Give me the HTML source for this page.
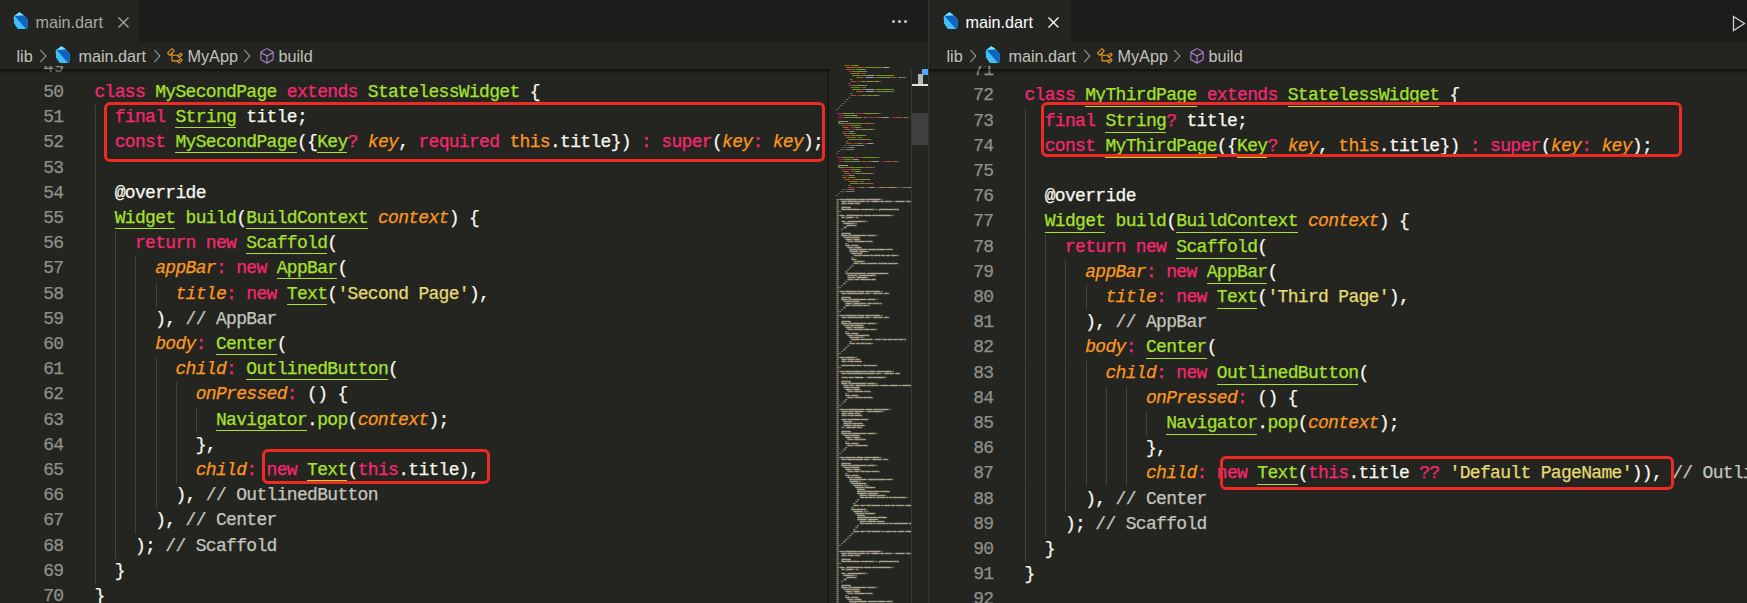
<!DOCTYPE html>
<html><head><meta charset="utf-8"><style>
*{margin:0;padding:0;box-sizing:border-box}
html,body{width:1747px;height:603px;overflow:hidden;background:#242520}
body{position:relative;font-family:"Liberation Sans",sans-serif}
.abs{position:absolute}
.pane{position:absolute;top:0;height:603px;overflow:hidden}
.ig{position:absolute;width:1px;background:#42433d}
.ln{position:absolute;-webkit-text-stroke:0.25px;width:60px;text-align:right;font-family:"Liberation Mono",monospace;font-size:18.0px;letter-spacing:-0.682px;line-height:25.2px;color:#90908a;white-space:pre}
.cl{position:absolute;-webkit-text-stroke:0.25px;font-family:"Liberation Mono",monospace;font-size:18.0px;letter-spacing:-0.682px;line-height:25.2px;color:#f8f8f2;white-space:pre}
.mg{color:#e8e4d0;-webkit-text-stroke:0.35px}
.k{color:#f92672}
.f{color:#a6e22e}
.t,.u{color:#a6e22e}
.ul{position:absolute;height:1.1px}
.p{color:#fd971f;font-style:italic}
.o{color:#fd971f}
.s{color:#e6db74}
.c{color:#c4c4be}
.tabbar{position:absolute;top:0;height:41.5px;background:#1c1d1a}
.tab{position:absolute;top:0;height:41.5px;background:#242520}
.crumb{position:absolute;top:41.5px;height:27.5px;background:#242520}
.ui{position:absolute;font-size:16.2px;line-height:20px;white-space:pre}
.redbox{position:absolute;border:3px solid #ee2a22;border-radius:6px}
</style></head>
<body>
<div class="tabbar" style="left:0;width:928px"></div>
<div class="tab" style="left:0;width:139px"></div>
<div class="abs" style="left:139px;top:0;width:1px;height:41px;background:#1e1f1c"></div>
<div class="crumb" style="left:0;width:928px"></div>
<svg class="abs" style="left:12.5px;top:12.3px" width="15.5" height="17.5" viewBox="0 0 16 18">
<path d="M6.5 0.3 L1.2 4.2 Q0.6 4.8 0.8 5.8 L1.2 11.5 L5 17.3 L12.8 17.6 Q14.6 17.4 15 15.8 L15.2 8.4 Q15 7.4 14.2 6.6 L9.8 2.4 Z" fill="#40c4ff"/>
<path d="M6.5 0.3 L1.5 4 L10.5 3.6 L9.8 2.4 Z" fill="#7fe3f7"/>
<path d="M1.5 4 L10.5 3.6 L14.2 6.6 Q15 7.4 15.2 8.4 L15 15.8 L13.2 17.5 Z" fill="#0d65c2"/>
<path d="M1.5 4 L13.2 17.5 L5 17.3 L1.2 11.5 L0.8 5.8 Z" fill="#3fc0f8"/>
</svg>
<div class="ui" style="left:35.5px;top:12px;color:#a8a8a4">main.dart</div>
<svg class="abs" style="left:117px;top:16px" width="13" height="13" viewBox="0 0 13 13"><path d="M1.5 1.5 L11.5 11.5 M11.5 1.5 L1.5 11.5" stroke="#a8a8a4" stroke-width="1.3"/></svg>
<div class="ui" style="left:16.5px;top:46px;color:#c2c2be">lib</div>
<svg class="abs" style="left:39px;top:49px" width="8" height="14" viewBox="0 0 8 14"><path d="M1.3 1 L6.8 7 L1.3 13" stroke="#a8a8a4" stroke-width="1.1" fill="none"/></svg>
<svg class="abs" style="left:55px;top:46px" width="15.5" height="17.5" viewBox="0 0 16 18">
<path d="M6.5 0.3 L1.2 4.2 Q0.6 4.8 0.8 5.8 L1.2 11.5 L5 17.3 L12.8 17.6 Q14.6 17.4 15 15.8 L15.2 8.4 Q15 7.4 14.2 6.6 L9.8 2.4 Z" fill="#40c4ff"/>
<path d="M6.5 0.3 L1.5 4 L10.5 3.6 L9.8 2.4 Z" fill="#7fe3f7"/>
<path d="M1.5 4 L10.5 3.6 L14.2 6.6 Q15 7.4 15.2 8.4 L15 15.8 L13.2 17.5 Z" fill="#0d65c2"/>
<path d="M1.5 4 L13.2 17.5 L5 17.3 L1.2 11.5 L0.8 5.8 Z" fill="#3fc0f8"/>
</svg>
<div class="ui" style="left:78.5px;top:46px;color:#c2c2be">main.dart</div>
<svg class="abs" style="left:152.5px;top:49px" width="8" height="14" viewBox="0 0 8 14"><path d="M1.3 1 L6.8 7 L1.3 13" stroke="#a8a8a4" stroke-width="1.1" fill="none"/></svg>
<svg class="abs" style="left:165.5px;top:46.5px" width="18" height="18" viewBox="0 0 16 16">
<path fill="#ee9d28" d="M11.34 9.71h.71l2.67-2.67v-.71L13.38 5h-.7l-1.82 1.81h-5V5.56l1.86-1.85V3l-2-2H5L1 5v.71l2 2h.71l1.14-1.15v5.79l.5.5H10v.52l1.33 1.34h.71l2.67-2.67v-.71L13.37 10h-.7l-1.86 1.85h-5v-4H10v.48l1.34 1.38zm1.69-3.65l.63.63-2 2-.63-.63 2-2zm0 5l.63.63-2 2-.63-.63 2-2zM3.35 6.65l-1.29-1.3 3.29-3.29 1.3 1.29-3.3 3.3z"/>
</svg>
<div class="ui" style="left:187.5px;top:46px;color:#c2c2be">MyApp</div>
<svg class="abs" style="left:243px;top:49px" width="8" height="14" viewBox="0 0 8 14"><path d="M1.3 1 L6.8 7 L1.3 13" stroke="#a8a8a4" stroke-width="1.1" fill="none"/></svg>
<svg class="abs" style="left:257.5px;top:46.5px" width="18" height="18" viewBox="0 0 16 16">
<path fill="#b180d7" d="M13.51 4l-5-3h-1l-5 3-.49.86v6l.49.85 5 3h1l5-3 .49-.85v-6L13.51 4zm-6 9.56l-4.5-2.7V5.7l4.5 2.45v5.41zM3.27 4.7l4.74-2.84 4.74 2.84-4.74 2.59L3.27 4.7zm9.74 6.16l-4.5 2.7V8.15l4.5-2.45v5.16z"/>
</svg>
<div class="ui" style="left:278.5px;top:46px;color:#c2c2be">build</div>
<div class="abs" style="left:892px;top:20px;width:3px;height:3px;border-radius:50%;background:#c8c8c4;box-shadow:6px 0 0 #c8c8c4, 12px 0 0 #c8c8c4"></div>
<div class="tabbar" style="left:929px;width:818px"></div>
<div class="tab" style="left:929px;width:141px"></div>
<div class="crumb" style="left:929px;width:818px"></div>
<svg class="abs" style="left:942.5px;top:12.3px" width="15.5" height="17.5" viewBox="0 0 16 18">
<path d="M6.5 0.3 L1.2 4.2 Q0.6 4.8 0.8 5.8 L1.2 11.5 L5 17.3 L12.8 17.6 Q14.6 17.4 15 15.8 L15.2 8.4 Q15 7.4 14.2 6.6 L9.8 2.4 Z" fill="#40c4ff"/>
<path d="M6.5 0.3 L1.5 4 L10.5 3.6 L9.8 2.4 Z" fill="#7fe3f7"/>
<path d="M1.5 4 L10.5 3.6 L14.2 6.6 Q15 7.4 15.2 8.4 L15 15.8 L13.2 17.5 Z" fill="#0d65c2"/>
<path d="M1.5 4 L13.2 17.5 L5 17.3 L1.2 11.5 L0.8 5.8 Z" fill="#3fc0f8"/>
</svg>
<div class="ui" style="left:965.5px;top:12px;color:#ffffff">main.dart</div>
<svg class="abs" style="left:1047px;top:16px" width="13" height="13" viewBox="0 0 13 13"><path d="M1.5 1.5 L11.5 11.5 M11.5 1.5 L1.5 11.5" stroke="#ffffff" stroke-width="1.3"/></svg>
<div class="ui" style="left:946.5px;top:46px;color:#c2c2be">lib</div>
<svg class="abs" style="left:969px;top:49px" width="8" height="14" viewBox="0 0 8 14"><path d="M1.3 1 L6.8 7 L1.3 13" stroke="#a8a8a4" stroke-width="1.1" fill="none"/></svg>
<svg class="abs" style="left:985px;top:46px" width="15.5" height="17.5" viewBox="0 0 16 18">
<path d="M6.5 0.3 L1.2 4.2 Q0.6 4.8 0.8 5.8 L1.2 11.5 L5 17.3 L12.8 17.6 Q14.6 17.4 15 15.8 L15.2 8.4 Q15 7.4 14.2 6.6 L9.8 2.4 Z" fill="#40c4ff"/>
<path d="M6.5 0.3 L1.5 4 L10.5 3.6 L9.8 2.4 Z" fill="#7fe3f7"/>
<path d="M1.5 4 L10.5 3.6 L14.2 6.6 Q15 7.4 15.2 8.4 L15 15.8 L13.2 17.5 Z" fill="#0d65c2"/>
<path d="M1.5 4 L13.2 17.5 L5 17.3 L1.2 11.5 L0.8 5.8 Z" fill="#3fc0f8"/>
</svg>
<div class="ui" style="left:1008.5px;top:46px;color:#c2c2be">main.dart</div>
<svg class="abs" style="left:1082.5px;top:49px" width="8" height="14" viewBox="0 0 8 14"><path d="M1.3 1 L6.8 7 L1.3 13" stroke="#a8a8a4" stroke-width="1.1" fill="none"/></svg>
<svg class="abs" style="left:1095.5px;top:46.5px" width="18" height="18" viewBox="0 0 16 16">
<path fill="#ee9d28" d="M11.34 9.71h.71l2.67-2.67v-.71L13.38 5h-.7l-1.82 1.81h-5V5.56l1.86-1.85V3l-2-2H5L1 5v.71l2 2h.71l1.14-1.15v5.79l.5.5H10v.52l1.33 1.34h.71l2.67-2.67v-.71L13.37 10h-.7l-1.86 1.85h-5v-4H10v.48l1.34 1.38zm1.69-3.65l.63.63-2 2-.63-.63 2-2zm0 5l.63.63-2 2-.63-.63 2-2zM3.35 6.65l-1.29-1.3 3.29-3.29 1.3 1.29-3.3 3.3z"/>
</svg>
<div class="ui" style="left:1117.5px;top:46px;color:#c2c2be">MyApp</div>
<svg class="abs" style="left:1173px;top:49px" width="8" height="14" viewBox="0 0 8 14"><path d="M1.3 1 L6.8 7 L1.3 13" stroke="#a8a8a4" stroke-width="1.1" fill="none"/></svg>
<svg class="abs" style="left:1187.5px;top:46.5px" width="18" height="18" viewBox="0 0 16 16">
<path fill="#b180d7" d="M13.51 4l-5-3h-1l-5 3-.49.86v6l.49.85 5 3h1l5-3 .49-.85v-6L13.51 4zm-6 9.56l-4.5-2.7V5.7l4.5 2.45v5.41zM3.27 4.7l4.74-2.84 4.74 2.84-4.74 2.59L3.27 4.7zm9.74 6.16l-4.5 2.7V8.15l4.5-2.45v5.16z"/>
</svg>
<div class="ui" style="left:1208.5px;top:46px;color:#c2c2be">build</div>
<svg class="abs" style="left:1732px;top:15px" width="14" height="17" viewBox="0 0 14 17"><path d="M1.5 1.5 L12.5 8.5 L1.5 15.5 Z" stroke="#d0d0cc" stroke-width="1.3" fill="none"/></svg>
<div class="abs" style="left:928px;top:0;width:1px;height:603px;background:#34352f"></div>
<div class="pane" style="left:0;width:827px;top:65.5px;height:538px"><div style="position:absolute;left:0;top:-65.5px;width:827px;height:603px">
<div class="ln" style="left:3.50px;top:54.81px">49</div>
<div class="cl" style="left:94.50px;top:54.81px"></div>
<div class="ln" style="left:3.50px;top:80.01px">50</div>
<div class="ul" style="left:155.22px;top:101.90px;width:121.44px;background:#c8d040"></div>
<div class="ul" style="left:367.74px;top:101.90px;width:151.80px;background:#c8d040"></div>
<div class="cl" style="left:94.50px;top:80.01px"><span class="k">class</span><span class="w"> </span><span class="u">MySecondPage</span><span class="w"> </span><span class="k">extends</span><span class="w"> </span><span class="u">StatelessWidget</span><span class="w"> {</span></div>
<div class="ig" style="left:95.00px;top:105.21px;height:25.20px"></div>
<div class="ln" style="left:3.50px;top:105.21px">51</div>
<div class="ul" style="left:175.46px;top:127.10px;width:60.72px;background:#a6e22e"></div>
<div class="cl" style="left:94.50px;top:105.21px"><span class="w">  </span><span class="k">final</span><span class="w"> </span><span class="t">String</span><span class="w"> title;</span></div>
<div class="ig" style="left:95.00px;top:130.41px;height:25.20px"></div>
<div class="ln" style="left:3.50px;top:130.41px">52</div>
<div class="ul" style="left:175.46px;top:152.30px;width:121.44px;background:#a6e22e"></div>
<div class="ul" style="left:317.14px;top:152.30px;width:30.36px;background:#a6e22e"></div>
<div class="cl" style="left:94.50px;top:130.41px"><span class="w">  </span><span class="k">const</span><span class="w"> </span><span class="t">MySecondPage</span><span class="w">({</span><span class="t">Key</span><span class="k">?</span><span class="w"> </span><span class="p">key</span><span class="w">, </span><span class="k">required</span><span class="w"> </span><span class="o">this</span><span class="w">.title}) </span><span class="k">:</span><span class="w"> </span><span class="k">super</span><span class="w">(</span><span class="p">key</span><span class="k">:</span><span class="w"> </span><span class="p">key</span><span class="w">);</span></div>
<div class="ig" style="left:95.00px;top:155.61px;height:25.20px"></div>
<div class="ln" style="left:3.50px;top:155.61px">53</div>
<div class="cl" style="left:94.50px;top:155.61px"></div>
<div class="ig" style="left:95.00px;top:180.81px;height:25.20px"></div>
<div class="ln" style="left:3.50px;top:180.81px">54</div>
<div class="cl" style="left:94.50px;top:180.81px"><span class="w">  @override</span></div>
<div class="ig" style="left:95.00px;top:206.01px;height:25.20px"></div>
<div class="ln" style="left:3.50px;top:206.01px">55</div>
<div class="ul" style="left:114.74px;top:227.90px;width:60.72px;background:#a6e22e"></div>
<div class="ul" style="left:246.30px;top:227.90px;width:121.44px;background:#a6e22e"></div>
<div class="cl" style="left:94.50px;top:206.01px"><span class="w">  </span><span class="t">Widget</span><span class="w"> </span><span class="f">build</span><span class="w">(</span><span class="t">BuildContext</span><span class="w"> </span><span class="p">context</span><span class="w">) {</span></div>
<div class="ig" style="left:95.00px;top:231.21px;height:25.20px"></div>
<div class="ig" style="left:115.00px;top:231.21px;height:25.20px"></div>
<div class="ln" style="left:3.50px;top:231.21px">56</div>
<div class="ul" style="left:246.30px;top:253.10px;width:80.96px;background:#a6e22e"></div>
<div class="cl" style="left:94.50px;top:231.21px"><span class="w">    </span><span class="k">return</span><span class="w"> </span><span class="k">new</span><span class="w"> </span><span class="t">Scaffold</span><span class="w">(</span></div>
<div class="ig" style="left:95.00px;top:256.41px;height:25.20px"></div>
<div class="ig" style="left:115.00px;top:256.41px;height:25.20px"></div>
<div class="ig" style="left:135.00px;top:256.41px;height:25.20px"></div>
<div class="ln" style="left:3.50px;top:256.41px">57</div>
<div class="ul" style="left:276.66px;top:278.30px;width:60.72px;background:#a6e22e"></div>
<div class="cl" style="left:94.50px;top:256.41px"><span class="w">      </span><span class="p">appBar</span><span class="k">:</span><span class="w"> </span><span class="k">new</span><span class="w"> </span><span class="t">AppBar</span><span class="w">(</span></div>
<div class="ig" style="left:95.00px;top:281.61px;height:25.20px"></div>
<div class="ig" style="left:115.00px;top:281.61px;height:25.20px"></div>
<div class="ig" style="left:135.00px;top:281.61px;height:25.20px"></div>
<div class="ig" style="left:156.00px;top:281.61px;height:25.20px"></div>
<div class="ln" style="left:3.50px;top:281.61px">58</div>
<div class="ul" style="left:286.78px;top:303.50px;width:40.48px;background:#a6e22e"></div>
<div class="cl" style="left:94.50px;top:281.61px"><span class="w">        </span><span class="p">title</span><span class="k">:</span><span class="w"> </span><span class="k">new</span><span class="w"> </span><span class="t">Text</span><span class="w">(</span><span class="s">&#x27;Second Page&#x27;</span><span class="w">),</span></div>
<div class="ig" style="left:95.00px;top:306.81px;height:25.20px"></div>
<div class="ig" style="left:115.00px;top:306.81px;height:25.20px"></div>
<div class="ig" style="left:135.00px;top:306.81px;height:25.20px"></div>
<div class="ln" style="left:3.50px;top:306.81px">59</div>
<div class="cl" style="left:94.50px;top:306.81px"><span class="w">      ), </span><span class="c">// AppBar</span></div>
<div class="ig" style="left:95.00px;top:332.01px;height:25.20px"></div>
<div class="ig" style="left:115.00px;top:332.01px;height:25.20px"></div>
<div class="ig" style="left:135.00px;top:332.01px;height:25.20px"></div>
<div class="ln" style="left:3.50px;top:332.01px">60</div>
<div class="ul" style="left:215.94px;top:353.90px;width:60.72px;background:#a6e22e"></div>
<div class="cl" style="left:94.50px;top:332.01px"><span class="w">      </span><span class="p">body</span><span class="k">:</span><span class="w"> </span><span class="t">Center</span><span class="w">(</span></div>
<div class="ig" style="left:95.00px;top:357.21px;height:25.20px"></div>
<div class="ig" style="left:115.00px;top:357.21px;height:25.20px"></div>
<div class="ig" style="left:135.00px;top:357.21px;height:25.20px"></div>
<div class="ig" style="left:156.00px;top:357.21px;height:25.20px"></div>
<div class="ln" style="left:3.50px;top:357.21px">61</div>
<div class="ul" style="left:246.30px;top:379.10px;width:141.68px;background:#a6e22e"></div>
<div class="cl" style="left:94.50px;top:357.21px"><span class="w">        </span><span class="p">child</span><span class="k">:</span><span class="w"> </span><span class="t">OutlinedButton</span><span class="w">(</span></div>
<div class="ig" style="left:95.00px;top:382.41px;height:25.20px"></div>
<div class="ig" style="left:115.00px;top:382.41px;height:25.20px"></div>
<div class="ig" style="left:135.00px;top:382.41px;height:25.20px"></div>
<div class="ig" style="left:156.00px;top:382.41px;height:25.20px"></div>
<div class="ig" style="left:176.00px;top:382.41px;height:25.20px"></div>
<div class="ln" style="left:3.50px;top:382.41px">62</div>
<div class="cl" style="left:94.50px;top:382.41px"><span class="w">          </span><span class="p">onPressed</span><span class="k">:</span><span class="w"> () {</span></div>
<div class="ig" style="left:95.00px;top:407.61px;height:25.20px"></div>
<div class="ig" style="left:115.00px;top:407.61px;height:25.20px"></div>
<div class="ig" style="left:135.00px;top:407.61px;height:25.20px"></div>
<div class="ig" style="left:156.00px;top:407.61px;height:25.20px"></div>
<div class="ig" style="left:176.00px;top:407.61px;height:25.20px"></div>
<div class="ig" style="left:196.00px;top:407.61px;height:25.20px"></div>
<div class="ln" style="left:3.50px;top:407.61px">63</div>
<div class="ul" style="left:215.94px;top:429.50px;width:91.08px;background:#a6e22e"></div>
<div class="cl" style="left:94.50px;top:407.61px"><span class="w">            </span><span class="t">Navigator</span><span class="w">.</span><span class="f">pop</span><span class="w">(</span><span class="p">context</span><span class="w">);</span></div>
<div class="ig" style="left:95.00px;top:432.81px;height:25.20px"></div>
<div class="ig" style="left:115.00px;top:432.81px;height:25.20px"></div>
<div class="ig" style="left:135.00px;top:432.81px;height:25.20px"></div>
<div class="ig" style="left:156.00px;top:432.81px;height:25.20px"></div>
<div class="ig" style="left:176.00px;top:432.81px;height:25.20px"></div>
<div class="ln" style="left:3.50px;top:432.81px">64</div>
<div class="cl" style="left:94.50px;top:432.81px"><span class="w">          },</span></div>
<div class="ig" style="left:95.00px;top:458.01px;height:25.20px"></div>
<div class="ig" style="left:115.00px;top:458.01px;height:25.20px"></div>
<div class="ig" style="left:135.00px;top:458.01px;height:25.20px"></div>
<div class="ig" style="left:156.00px;top:458.01px;height:25.20px"></div>
<div class="ig" style="left:176.00px;top:458.01px;height:25.20px"></div>
<div class="ln" style="left:3.50px;top:458.01px">65</div>
<div class="ul" style="left:307.02px;top:479.90px;width:40.48px;background:#a6e22e"></div>
<div class="cl" style="left:94.50px;top:458.01px"><span class="w">          </span><span class="p">child</span><span class="k">:</span><span class="w"> </span><span class="k">new</span><span class="w"> </span><span class="t">Text</span><span class="w">(</span><span class="k">this</span><span class="w">.title),</span></div>
<div class="ig" style="left:95.00px;top:483.21px;height:25.20px"></div>
<div class="ig" style="left:115.00px;top:483.21px;height:25.20px"></div>
<div class="ig" style="left:135.00px;top:483.21px;height:25.20px"></div>
<div class="ig" style="left:156.00px;top:483.21px;height:25.20px"></div>
<div class="ln" style="left:3.50px;top:483.21px">66</div>
<div class="cl" style="left:94.50px;top:483.21px"><span class="w">        ), </span><span class="c">// OutlinedButton</span></div>
<div class="ig" style="left:95.00px;top:508.41px;height:25.20px"></div>
<div class="ig" style="left:115.00px;top:508.41px;height:25.20px"></div>
<div class="ig" style="left:135.00px;top:508.41px;height:25.20px"></div>
<div class="ln" style="left:3.50px;top:508.41px">67</div>
<div class="cl" style="left:94.50px;top:508.41px"><span class="w">      ), </span><span class="c">// Center</span></div>
<div class="ig" style="left:95.00px;top:533.61px;height:25.20px"></div>
<div class="ig" style="left:115.00px;top:533.61px;height:25.20px"></div>
<div class="ln" style="left:3.50px;top:533.61px">68</div>
<div class="cl" style="left:94.50px;top:533.61px"><span class="w">    ); </span><span class="c">// Scaffold</span></div>
<div class="ig" style="left:95.00px;top:558.81px;height:25.20px"></div>
<div class="ln" style="left:3.50px;top:558.81px">69</div>
<div class="cl" style="left:94.50px;top:558.81px"><span class="w">  }</span></div>
<div class="ln" style="left:3.50px;top:584.01px">70</div>
<div class="cl" style="left:94.50px;top:584.01px"><span class="w">}</span></div>
<div class="ln" style="left:3.50px;top:609.21px">71</div>
<div class="cl" style="left:94.50px;top:609.21px"></div>
<div class="redbox" style="left:104px;top:101.5px;width:721px;height:60.5px"></div>
<div class="redbox" style="left:261.5px;top:448.7px;width:228.5px;height:35.3px"></div>
</div></div>
<div class="pane" style="left:929px;width:818px;top:65.5px;height:538px"><div style="position:absolute;left:-929px;top:-65.5px;width:1747px;height:603px">
<div class="ln" style="left:933.50px;top:58.11px">71</div>
<div class="cl" style="left:1024.50px;top:58.11px"></div>
<div class="ln" style="left:933.50px;top:83.31px">72</div>
<div class="ul" style="left:1085.22px;top:106.30px;width:111.32px;background:#c8d040"></div>
<div class="ul" style="left:1287.62px;top:106.30px;width:151.80px;background:#c8d040"></div>
<div class="cl" style="left:1024.50px;top:83.31px"><span class="k">class</span><span class="w"> </span><span class="u">MyThirdPage</span><span class="w"> </span><span class="k">extends</span><span class="w"> </span><span class="u">StatelessWidget</span><span class="w"> {</span></div>
<div class="ig" style="left:1025.00px;top:108.51px;height:25.20px"></div>
<div class="ln" style="left:933.50px;top:108.51px">73</div>
<div class="ul" style="left:1105.46px;top:131.50px;width:60.72px;background:#a6e22e"></div>
<div class="cl" style="left:1024.50px;top:108.51px"><span class="w">  </span><span class="k">final</span><span class="w"> </span><span class="t">String</span><span class="k">?</span><span class="w"> title;</span></div>
<div class="ig" style="left:1025.00px;top:133.71px;height:25.20px"></div>
<div class="ln" style="left:933.50px;top:133.71px">74</div>
<div class="ul" style="left:1105.46px;top:156.70px;width:111.32px;background:#a6e22e"></div>
<div class="ul" style="left:1237.02px;top:156.70px;width:30.36px;background:#a6e22e"></div>
<div class="cl" style="left:1024.50px;top:133.71px"><span class="w">  </span><span class="k">const</span><span class="w"> </span><span class="t">MyThirdPage</span><span class="w">({</span><span class="t">Key</span><span class="k">?</span><span class="w"> </span><span class="p">key</span><span class="w">, </span><span class="o">this</span><span class="w">.title}) </span><span class="k">:</span><span class="w"> </span><span class="k">super</span><span class="w">(</span><span class="p">key</span><span class="k">:</span><span class="w"> </span><span class="p">key</span><span class="w">);</span></div>
<div class="ig" style="left:1025.00px;top:158.91px;height:25.20px"></div>
<div class="ln" style="left:933.50px;top:158.91px">75</div>
<div class="cl" style="left:1024.50px;top:158.91px"></div>
<div class="ig" style="left:1025.00px;top:184.11px;height:25.20px"></div>
<div class="ln" style="left:933.50px;top:184.11px">76</div>
<div class="cl" style="left:1024.50px;top:184.11px"><span class="w">  @override</span></div>
<div class="ig" style="left:1025.00px;top:209.31px;height:25.20px"></div>
<div class="ln" style="left:933.50px;top:209.31px">77</div>
<div class="ul" style="left:1044.74px;top:232.30px;width:60.72px;background:#a6e22e"></div>
<div class="ul" style="left:1176.30px;top:232.30px;width:121.44px;background:#a6e22e"></div>
<div class="cl" style="left:1024.50px;top:209.31px"><span class="w">  </span><span class="t">Widget</span><span class="w"> </span><span class="f">build</span><span class="w">(</span><span class="t">BuildContext</span><span class="w"> </span><span class="p">context</span><span class="w">) {</span></div>
<div class="ig" style="left:1025.00px;top:234.51px;height:25.20px"></div>
<div class="ig" style="left:1045.00px;top:234.51px;height:25.20px"></div>
<div class="ln" style="left:933.50px;top:234.51px">78</div>
<div class="ul" style="left:1176.30px;top:257.50px;width:80.96px;background:#a6e22e"></div>
<div class="cl" style="left:1024.50px;top:234.51px"><span class="w">    </span><span class="k">return</span><span class="w"> </span><span class="k">new</span><span class="w"> </span><span class="t">Scaffold</span><span class="w">(</span></div>
<div class="ig" style="left:1025.00px;top:259.71px;height:25.20px"></div>
<div class="ig" style="left:1045.00px;top:259.71px;height:25.20px"></div>
<div class="ig" style="left:1065.00px;top:259.71px;height:25.20px"></div>
<div class="ln" style="left:933.50px;top:259.71px">79</div>
<div class="ul" style="left:1206.66px;top:282.70px;width:60.72px;background:#a6e22e"></div>
<div class="cl" style="left:1024.50px;top:259.71px"><span class="w">      </span><span class="p">appBar</span><span class="k">:</span><span class="w"> </span><span class="k">new</span><span class="w"> </span><span class="t">AppBar</span><span class="w">(</span></div>
<div class="ig" style="left:1025.00px;top:284.91px;height:25.20px"></div>
<div class="ig" style="left:1045.00px;top:284.91px;height:25.20px"></div>
<div class="ig" style="left:1065.00px;top:284.91px;height:25.20px"></div>
<div class="ig" style="left:1086.00px;top:284.91px;height:25.20px"></div>
<div class="ln" style="left:933.50px;top:284.91px">80</div>
<div class="ul" style="left:1216.78px;top:307.90px;width:40.48px;background:#a6e22e"></div>
<div class="cl" style="left:1024.50px;top:284.91px"><span class="w">        </span><span class="p">title</span><span class="k">:</span><span class="w"> </span><span class="k">new</span><span class="w"> </span><span class="t">Text</span><span class="w">(</span><span class="s">&#x27;Third Page&#x27;</span><span class="w">),</span></div>
<div class="ig" style="left:1025.00px;top:310.11px;height:25.20px"></div>
<div class="ig" style="left:1045.00px;top:310.11px;height:25.20px"></div>
<div class="ig" style="left:1065.00px;top:310.11px;height:25.20px"></div>
<div class="ln" style="left:933.50px;top:310.11px">81</div>
<div class="cl" style="left:1024.50px;top:310.11px"><span class="w">      ), </span><span class="c">// AppBar</span></div>
<div class="ig" style="left:1025.00px;top:335.31px;height:25.20px"></div>
<div class="ig" style="left:1045.00px;top:335.31px;height:25.20px"></div>
<div class="ig" style="left:1065.00px;top:335.31px;height:25.20px"></div>
<div class="ln" style="left:933.50px;top:335.31px">82</div>
<div class="ul" style="left:1145.94px;top:358.30px;width:60.72px;background:#a6e22e"></div>
<div class="cl" style="left:1024.50px;top:335.31px"><span class="w">      </span><span class="p">body</span><span class="k">:</span><span class="w"> </span><span class="t">Center</span><span class="w">(</span></div>
<div class="ig" style="left:1025.00px;top:360.51px;height:25.20px"></div>
<div class="ig" style="left:1045.00px;top:360.51px;height:25.20px"></div>
<div class="ig" style="left:1065.00px;top:360.51px;height:25.20px"></div>
<div class="ig" style="left:1086.00px;top:360.51px;height:25.20px"></div>
<div class="ln" style="left:933.50px;top:360.51px">83</div>
<div class="ul" style="left:1216.78px;top:383.50px;width:141.68px;background:#a6e22e"></div>
<div class="cl" style="left:1024.50px;top:360.51px"><span class="w">        </span><span class="p">child</span><span class="k">:</span><span class="w"> </span><span class="k">new</span><span class="w"> </span><span class="t">OutlinedButton</span><span class="w">(</span></div>
<div class="ig" style="left:1025.00px;top:385.71px;height:25.20px"></div>
<div class="ig" style="left:1045.00px;top:385.71px;height:25.20px"></div>
<div class="ig" style="left:1065.00px;top:385.71px;height:25.20px"></div>
<div class="ig" style="left:1086.00px;top:385.71px;height:25.20px"></div>
<div class="ig" style="left:1106.00px;top:385.71px;height:25.20px"></div>
<div class="ig" style="left:1126.00px;top:385.71px;height:25.20px"></div>
<div class="ln" style="left:933.50px;top:385.71px">84</div>
<div class="cl" style="left:1024.50px;top:385.71px"><span class="w">            </span><span class="p">onPressed</span><span class="k">:</span><span class="w"> () {</span></div>
<div class="ig" style="left:1025.00px;top:410.91px;height:25.20px"></div>
<div class="ig" style="left:1045.00px;top:410.91px;height:25.20px"></div>
<div class="ig" style="left:1065.00px;top:410.91px;height:25.20px"></div>
<div class="ig" style="left:1086.00px;top:410.91px;height:25.20px"></div>
<div class="ig" style="left:1106.00px;top:410.91px;height:25.20px"></div>
<div class="ig" style="left:1126.00px;top:410.91px;height:25.20px"></div>
<div class="ig" style="left:1146.00px;top:410.91px;height:25.20px"></div>
<div class="ln" style="left:933.50px;top:410.91px">85</div>
<div class="ul" style="left:1166.18px;top:433.90px;width:91.08px;background:#a6e22e"></div>
<div class="cl" style="left:1024.50px;top:410.91px"><span class="w">              </span><span class="t">Navigator</span><span class="w">.</span><span class="f">pop</span><span class="w">(</span><span class="p">context</span><span class="w">);</span></div>
<div class="ig" style="left:1025.00px;top:436.11px;height:25.20px"></div>
<div class="ig" style="left:1045.00px;top:436.11px;height:25.20px"></div>
<div class="ig" style="left:1065.00px;top:436.11px;height:25.20px"></div>
<div class="ig" style="left:1086.00px;top:436.11px;height:25.20px"></div>
<div class="ig" style="left:1106.00px;top:436.11px;height:25.20px"></div>
<div class="ig" style="left:1126.00px;top:436.11px;height:25.20px"></div>
<div class="ln" style="left:933.50px;top:436.11px">86</div>
<div class="cl" style="left:1024.50px;top:436.11px"><span class="w">            },</span></div>
<div class="ig" style="left:1025.00px;top:461.31px;height:25.20px"></div>
<div class="ig" style="left:1045.00px;top:461.31px;height:25.20px"></div>
<div class="ig" style="left:1065.00px;top:461.31px;height:25.20px"></div>
<div class="ig" style="left:1086.00px;top:461.31px;height:25.20px"></div>
<div class="ig" style="left:1106.00px;top:461.31px;height:25.20px"></div>
<div class="ig" style="left:1126.00px;top:461.31px;height:25.20px"></div>
<div class="ln" style="left:933.50px;top:461.31px">87</div>
<div class="ul" style="left:1257.26px;top:484.30px;width:40.48px;background:#a6e22e"></div>
<div class="cl" style="left:1024.50px;top:461.31px"><span class="w">            </span><span class="p">child</span><span class="k">:</span><span class="w"> </span><span class="k">new</span><span class="w"> </span><span class="t">Text</span><span class="w">(</span><span class="k">this</span><span class="w">.title </span><span class="k">??</span><span class="w"> </span><span class="s">&#x27;Default PageName&#x27;</span><span class="w">)), </span><span class="c">// OutlinedButton</span></div>
<div class="ig" style="left:1025.00px;top:486.51px;height:25.20px"></div>
<div class="ig" style="left:1045.00px;top:486.51px;height:25.20px"></div>
<div class="ig" style="left:1065.00px;top:486.51px;height:25.20px"></div>
<div class="ln" style="left:933.50px;top:486.51px">88</div>
<div class="cl" style="left:1024.50px;top:486.51px"><span class="w">      ), </span><span class="c">// Center</span></div>
<div class="ig" style="left:1025.00px;top:511.71px;height:25.20px"></div>
<div class="ig" style="left:1045.00px;top:511.71px;height:25.20px"></div>
<div class="ln" style="left:933.50px;top:511.71px">89</div>
<div class="cl" style="left:1024.50px;top:511.71px"><span class="w">    ); </span><span class="c">// Scaffold</span></div>
<div class="ig" style="left:1025.00px;top:536.91px;height:25.20px"></div>
<div class="ln" style="left:933.50px;top:536.91px">90</div>
<div class="cl" style="left:1024.50px;top:536.91px"><span class="w">  }</span></div>
<div class="ln" style="left:933.50px;top:562.11px">91</div>
<div class="cl" style="left:1024.50px;top:562.11px"><span class="w">}</span></div>
<div class="ln" style="left:933.50px;top:587.31px">92</div>
<div class="cl" style="left:1024.50px;top:587.31px"></div>
<div class="redbox" style="left:1041px;top:102px;width:641px;height:54.5px"></div>
<div class="redbox" style="left:1219.5px;top:455.5px;width:454.5px;height:34.5px"></div>
</div></div>
<div class="abs" style="left:0;top:69px;width:829px;height:5px;background:linear-gradient(#0000008c,#00000000)"></div>
<div class="abs" style="left:929px;top:69px;width:818px;height:5px;background:linear-gradient(#0000008c,#00000000)"></div>
<div class="abs" style="left:829px;top:64px;width:82px;height:539px;overflow:hidden"><div class="abs" style="left:-829px;top:-64px;width:1747px;height:603px"><div class="abs" style="left:836.5px;top:65.10px;font-family:'Liberation Mono',monospace;font-size:1.667px;line-height:2.0px;white-space:pre;opacity:0.75;-webkit-text-stroke:0.2px"><span style="color:#f8f8f2">        </span><span style="color:#fd971f">child</span><span style="color:#f92672">:</span><span style="color:#f8f8f2"> </span><span style="color:#a6e22e">Column</span><span style="color:#f8f8f2">(</span><br><span style="color:#f8f8f2">          </span><span style="color:#fd971f">mainAxisAlignment</span><span style="color:#f92672">:</span><span style="color:#f8f8f2"> </span><span style="color:#a6e22e">MainAxisAlignment</span><span style="color:#f8f8f2">.</span><span style="color:#f8f8f2">center</span><span style="color:#f8f8f2">,</span><br><span style="color:#f8f8f2">          </span><span style="color:#fd971f">children</span><span style="color:#f92672">:</span><span style="color:#f8f8f2"> </span><span style="color:#f8f8f2">&lt;</span><span style="color:#a6e22e">Widget</span><span style="color:#f8f8f2">&gt;</span><span style="color:#f8f8f2">[</span><br><span style="color:#f8f8f2">            </span><span style="color:#f92672">new</span><span style="color:#f8f8f2"> </span><span style="color:#a6e22e">OutlinedButton</span><span style="color:#f8f8f2">(</span><br><span style="color:#f8f8f2">              </span><span style="color:#fd971f">onPressed</span><span style="color:#f92672">:</span><span style="color:#f8f8f2"> </span><span style="color:#f8f8f2">(</span><span style="color:#f8f8f2">)</span><span style="color:#f8f8f2"> </span><span style="color:#f8f8f2">{</span><br><span style="color:#f8f8f2">                </span><span style="color:#a6e22e">Navigator</span><span style="color:#f8f8f2">.</span><span style="color:#a6e22e">push</span><span style="color:#f8f8f2">(</span><span style="color:#f8f8f2">context</span><span style="color:#f8f8f2">,</span><span style="color:#f8f8f2"> </span><span style="color:#a6e22e">MaterialPageRoute</span><span style="color:#f8f8f2">(</span><br><span style="color:#f8f8f2">                    </span><span style="color:#fd971f">builder</span><span style="color:#f92672">:</span><span style="color:#f8f8f2"> </span><span style="color:#f8f8f2">(</span><span style="color:#f8f8f2">context</span><span style="color:#f8f8f2">)</span><span style="color:#f8f8f2"> </span><span style="color:#f8f8f2">=</span><span style="color:#f8f8f2">&gt;</span><span style="color:#f8f8f2"> </span><span style="color:#a6e22e">MySecondPage</span><span style="color:#f8f8f2">(</span><span style="color:#fd971f">title</span><span style="color:#f92672">:</span><span style="color:#f8f8f2"> </span><span style="color:#e6db74">&#x27;xx&#x27;</span><span style="color:#f8f8f2">)</span><span style="color:#f8f8f2">)</span><span style="color:#f8f8f2">)</span><span style="color:#f8f8f2">;</span><br><span style="color:#f8f8f2">              </span><span style="color:#f8f8f2">}</span><span style="color:#f8f8f2">,</span><br><span style="color:#f8f8f2">              </span><span style="color:#fd971f">child</span><span style="color:#f92672">:</span><span style="color:#f8f8f2"> </span><span style="color:#f92672">new</span><span style="color:#f8f8f2"> </span><span style="color:#a6e22e">Text</span><span style="color:#f8f8f2">(</span><span style="color:#e6db74">&#x27;Second Page&#x27;</span><span style="color:#f8f8f2">)</span><span style="color:#f8f8f2">,</span><br><span style="color:#f8f8f2">            </span><span style="color:#f8f8f2">)</span><span style="color:#f8f8f2">,</span><br><span style="color:#f8f8f2">            </span><span style="color:#f92672">new</span><span style="color:#f8f8f2"> </span><span style="color:#a6e22e">OutlinedButton</span><span style="color:#f8f8f2">(</span><br><span style="color:#f8f8f2">              </span><span style="color:#fd971f">onPressed</span><span style="color:#f92672">:</span><span style="color:#f8f8f2"> </span><span style="color:#f8f8f2">(</span><span style="color:#f8f8f2">)</span><span style="color:#f8f8f2"> </span><span style="color:#f8f8f2">{</span><br><span style="color:#f8f8f2">                </span><span style="color:#a6e22e">Navigator</span><span style="color:#f8f8f2">.</span><span style="color:#a6e22e">push</span><span style="color:#f8f8f2">(</span><span style="color:#f8f8f2">context</span><span style="color:#f8f8f2">,</span><span style="color:#f8f8f2"> </span><span style="color:#a6e22e">MaterialPageRoute</span><span style="color:#f8f8f2">(</span><br><span style="color:#f8f8f2">                    </span><span style="color:#fd971f">builder</span><span style="color:#f92672">:</span><span style="color:#f8f8f2"> </span><span style="color:#f8f8f2">(</span><span style="color:#f8f8f2">context</span><span style="color:#f8f8f2">)</span><span style="color:#f8f8f2"> </span><span style="color:#f8f8f2">=</span><span style="color:#f8f8f2">&gt;</span><span style="color:#f8f8f2"> </span><span style="color:#a6e22e">MyThirdPage</span><span style="color:#f8f8f2">(</span><span style="color:#f8f8f2">)</span><span style="color:#f8f8f2">)</span><span style="color:#f8f8f2">)</span><span style="color:#f8f8f2">;</span><br><span style="color:#f8f8f2">              </span><span style="color:#f8f8f2">}</span><span style="color:#f8f8f2">,</span><br><span style="color:#f8f8f2">              </span><span style="color:#fd971f">child</span><span style="color:#f92672">:</span><span style="color:#f8f8f2"> </span><span style="color:#f92672">new</span><span style="color:#f8f8f2"> </span><span style="color:#a6e22e">Text</span><span style="color:#f8f8f2">(</span><span style="color:#e6db74">&#x27;Third Page&#x27;</span><span style="color:#f8f8f2">)</span><span style="color:#f8f8f2">,</span><br><span style="color:#f8f8f2">            </span><span style="color:#f8f8f2">)</span><span style="color:#f8f8f2">,</span><br><span style="color:#f8f8f2">          </span><span style="color:#f8f8f2">]</span><span style="color:#f8f8f2">,</span><br><span style="color:#f8f8f2">        </span><span style="color:#f8f8f2">)</span><span style="color:#f8f8f2">,</span><br><span style="color:#f8f8f2">      </span><span style="color:#f8f8f2">)</span><span style="color:#f8f8f2">,</span><br><span style="color:#f8f8f2">    </span><span style="color:#f8f8f2">)</span><span style="color:#f8f8f2">;</span><br><span style="color:#f8f8f2">  </span><span style="color:#f8f8f2">}</span><br><span style="color:#f8f8f2">}</span><br><br><span style="color:#f92672">class</span><span style="color:#f8f8f2"> </span><span style="color:#a6e22e">MySecondPage</span><span style="color:#f8f8f2"> </span><span style="color:#f92672">extends</span><span style="color:#f8f8f2"> </span><span style="color:#a6e22e">StatelessWidget</span><span style="color:#f8f8f2"> {</span><br><span style="color:#f8f8f2">  </span><span style="color:#f92672">final</span><span style="color:#f8f8f2"> </span><span style="color:#a6e22e">String</span><span style="color:#f8f8f2"> title;</span><br><span style="color:#f8f8f2">  </span><span style="color:#f92672">const</span><span style="color:#f8f8f2"> </span><span style="color:#a6e22e">MySecondPage</span><span style="color:#f8f8f2">({</span><span style="color:#a6e22e">Key</span><span style="color:#f92672">?</span><span style="color:#f8f8f2"> </span><span style="color:#fd971f">key</span><span style="color:#f8f8f2">, </span><span style="color:#f92672">required</span><span style="color:#f8f8f2"> </span><span style="color:#fd971f">this</span><span style="color:#f8f8f2">.title}) </span><span style="color:#f92672">:</span><span style="color:#f8f8f2"> </span><span style="color:#f92672">super</span><span style="color:#f8f8f2">(</span><span style="color:#fd971f">key</span><span style="color:#f92672">:</span><span style="color:#f8f8f2"> </span><span style="color:#fd971f">key</span><span style="color:#f8f8f2">);</span><br><br><span style="color:#f8f8f2">  @override</span><br><span style="color:#f8f8f2">  </span><span style="color:#a6e22e">Widget</span><span style="color:#f8f8f2"> </span><span style="color:#a6e22e">build</span><span style="color:#f8f8f2">(</span><span style="color:#a6e22e">BuildContext</span><span style="color:#f8f8f2"> </span><span style="color:#fd971f">context</span><span style="color:#f8f8f2">) {</span><br><span style="color:#f8f8f2">    </span><span style="color:#f92672">return</span><span style="color:#f8f8f2"> </span><span style="color:#f92672">new</span><span style="color:#f8f8f2"> </span><span style="color:#a6e22e">Scaffold</span><span style="color:#f8f8f2">(</span><br><span style="color:#f8f8f2">      </span><span style="color:#fd971f">appBar</span><span style="color:#f92672">:</span><span style="color:#f8f8f2"> </span><span style="color:#f92672">new</span><span style="color:#f8f8f2"> </span><span style="color:#a6e22e">AppBar</span><span style="color:#f8f8f2">(</span><br><span style="color:#f8f8f2">        </span><span style="color:#fd971f">title</span><span style="color:#f92672">:</span><span style="color:#f8f8f2"> </span><span style="color:#f92672">new</span><span style="color:#f8f8f2"> </span><span style="color:#a6e22e">Text</span><span style="color:#f8f8f2">(</span><span style="color:#e6db74">&#x27;Second Page&#x27;</span><span style="color:#f8f8f2">),</span><br><span style="color:#f8f8f2">      ), </span><span style="color:#c4c4be">// AppBar</span><br><span style="color:#f8f8f2">      </span><span style="color:#fd971f">body</span><span style="color:#f92672">:</span><span style="color:#f8f8f2"> </span><span style="color:#a6e22e">Center</span><span style="color:#f8f8f2">(</span><br><span style="color:#f8f8f2">        </span><span style="color:#fd971f">child</span><span style="color:#f92672">:</span><span style="color:#f8f8f2"> </span><span style="color:#a6e22e">OutlinedButton</span><span style="color:#f8f8f2">(</span><br><span style="color:#f8f8f2">          </span><span style="color:#fd971f">onPressed</span><span style="color:#f92672">:</span><span style="color:#f8f8f2"> () {</span><br><span style="color:#f8f8f2">            </span><span style="color:#a6e22e">Navigator</span><span style="color:#f8f8f2">.</span><span style="color:#a6e22e">pop</span><span style="color:#f8f8f2">(</span><span style="color:#fd971f">context</span><span style="color:#f8f8f2">);</span><br><span style="color:#f8f8f2">          },</span><br><span style="color:#f8f8f2">          </span><span style="color:#fd971f">child</span><span style="color:#f92672">:</span><span style="color:#f8f8f2"> </span><span style="color:#f92672">new</span><span style="color:#f8f8f2"> </span><span style="color:#a6e22e">Text</span><span style="color:#f8f8f2">(</span><span style="color:#f92672">this</span><span style="color:#f8f8f2">.title),</span><br><span style="color:#f8f8f2">        ), </span><span style="color:#c4c4be">// OutlinedButton</span><br><span style="color:#f8f8f2">      ), </span><span style="color:#c4c4be">// Center</span><br><span style="color:#f8f8f2">    ); </span><span style="color:#c4c4be">// Scaffold</span><br><span style="color:#f8f8f2">  }</span><br><span style="color:#f8f8f2">}</span><br><br><span style="color:#f92672">class</span><span style="color:#f8f8f2"> </span><span style="color:#a6e22e">MyThirdPage</span><span style="color:#f8f8f2"> </span><span style="color:#f92672">extends</span><span style="color:#f8f8f2"> </span><span style="color:#a6e22e">StatelessWidget</span><span style="color:#f8f8f2"> {</span><br><span style="color:#f8f8f2">  </span><span style="color:#f92672">final</span><span style="color:#f8f8f2"> </span><span style="color:#a6e22e">String</span><span style="color:#f92672">?</span><span style="color:#f8f8f2"> title;</span><br><span style="color:#f8f8f2">  </span><span style="color:#f92672">const</span><span style="color:#f8f8f2"> </span><span style="color:#a6e22e">MyThirdPage</span><span style="color:#f8f8f2">({</span><span style="color:#a6e22e">Key</span><span style="color:#f92672">?</span><span style="color:#f8f8f2"> </span><span style="color:#fd971f">key</span><span style="color:#f8f8f2">, </span><span style="color:#fd971f">this</span><span style="color:#f8f8f2">.title}) </span><span style="color:#f92672">:</span><span style="color:#f8f8f2"> </span><span style="color:#f92672">super</span><span style="color:#f8f8f2">(</span><span style="color:#fd971f">key</span><span style="color:#f92672">:</span><span style="color:#f8f8f2"> </span><span style="color:#fd971f">key</span><span style="color:#f8f8f2">);</span><br><br><span style="color:#f8f8f2">  @override</span><br><span style="color:#f8f8f2">  </span><span style="color:#a6e22e">Widget</span><span style="color:#f8f8f2"> </span><span style="color:#a6e22e">build</span><span style="color:#f8f8f2">(</span><span style="color:#a6e22e">BuildContext</span><span style="color:#f8f8f2"> </span><span style="color:#fd971f">context</span><span style="color:#f8f8f2">) {</span><br><span style="color:#f8f8f2">    </span><span style="color:#f92672">return</span><span style="color:#f8f8f2"> </span><span style="color:#f92672">new</span><span style="color:#f8f8f2"> </span><span style="color:#a6e22e">Scaffold</span><span style="color:#f8f8f2">(</span><br><span style="color:#f8f8f2">      </span><span style="color:#fd971f">appBar</span><span style="color:#f92672">:</span><span style="color:#f8f8f2"> </span><span style="color:#f92672">new</span><span style="color:#f8f8f2"> </span><span style="color:#a6e22e">AppBar</span><span style="color:#f8f8f2">(</span><br><span style="color:#f8f8f2">        </span><span style="color:#fd971f">title</span><span style="color:#f92672">:</span><span style="color:#f8f8f2"> </span><span style="color:#f92672">new</span><span style="color:#f8f8f2"> </span><span style="color:#a6e22e">Text</span><span style="color:#f8f8f2">(</span><span style="color:#e6db74">&#x27;Third Page&#x27;</span><span style="color:#f8f8f2">),</span><br><span style="color:#f8f8f2">      ), </span><span style="color:#c4c4be">// AppBar</span><br><span style="color:#f8f8f2">      </span><span style="color:#fd971f">body</span><span style="color:#f92672">:</span><span style="color:#f8f8f2"> </span><span style="color:#a6e22e">Center</span><span style="color:#f8f8f2">(</span><br><span style="color:#f8f8f2">        </span><span style="color:#fd971f">child</span><span style="color:#f92672">:</span><span style="color:#f8f8f2"> </span><span style="color:#f92672">new</span><span style="color:#f8f8f2"> </span><span style="color:#a6e22e">OutlinedButton</span><span style="color:#f8f8f2">(</span><br><span style="color:#f8f8f2">            </span><span style="color:#fd971f">onPressed</span><span style="color:#f92672">:</span><span style="color:#f8f8f2"> () {</span><br><span style="color:#f8f8f2">              </span><span style="color:#a6e22e">Navigator</span><span style="color:#f8f8f2">.</span><span style="color:#a6e22e">pop</span><span style="color:#f8f8f2">(</span><span style="color:#fd971f">context</span><span style="color:#f8f8f2">);</span><br><span style="color:#f8f8f2">            },</span><br><span style="color:#f8f8f2">            </span><span style="color:#fd971f">child</span><span style="color:#f92672">:</span><span style="color:#f8f8f2"> </span><span style="color:#f92672">new</span><span style="color:#f8f8f2"> </span><span style="color:#a6e22e">Text</span><span style="color:#f8f8f2">(</span><span style="color:#f92672">this</span><span style="color:#f8f8f2">.title </span><span style="color:#f92672">??</span><span style="color:#f8f8f2"> </span><span style="color:#e6db74">&#x27;Default PageName&#x27;</span><span style="color:#f8f8f2">)), </span><span style="color:#c4c4be">// OutlinedButton</span><br><span style="color:#f8f8f2">      ), </span><span style="color:#c4c4be">// Center</span><br><span style="color:#f8f8f2">    ); </span><span style="color:#c4c4be">// Scaffold</span><br><span style="color:#f8f8f2">  }</span><br><span style="color:#f8f8f2">}</span><br><br><span class="mg">// class MyFourthPage extends StatefulWidget {</span><br><span class="mg">//   const MyFourthPage({Key? key, required this.title}) : super(key: key);</span><br><span class="mg">//   final String title;</span><br><span class="mg">// </span><br><span class="mg">//   @override</span><br><span class="mg">//   State&lt;MyFourthPage&gt; createState() =&gt; _MyFourthPageState();</span><br><span class="mg">// }</span><br><span class="mg">// </span><br><span class="mg">// class _MyFourthPageState extends State&lt;MyFourthPage&gt; {</span><br><span class="mg">//   int _counter = 0;</span><br><span class="mg">// </span><br><span class="mg">//   void _incrementCounter() {</span><br><span class="mg">//     setState(() {</span><br><span class="mg">//       _counter++;</span><br><span class="mg">//     });</span><br><span class="mg">//   }</span><br><span class="mg">// </span><br><span class="mg">//   @override</span><br><span class="mg">//   Widget build(BuildContext context) {</span><br><span class="mg">//     return Scaffold(</span><br><span class="mg">//       appBar: AppBar(</span><br><span class="mg">//         title: Text(widget.title),</span><br><span class="mg">//       ),</span><br><span class="mg">//       body: Center(</span><br><span class="mg">//         child: Column(</span><br><span class="mg">//           mainAxisAlignment: MainAxisAlignment.center,</span><br><span class="mg">//           children: &lt;Widget&gt;[</span><br><span class="mg">//             const Text(</span><br><span class="mg">//               &#x27;You have pushed the button this many times:&#x27;,</span><br><span class="mg">//             ),</span><br><span class="mg">//             Text(</span><br><span class="mg">//               &#x27;$_counter&#x27;,</span><br><span class="mg">//               style: Theme.of(context).textTheme.headline4,</span><br><span class="mg">//             ),</span><br><span class="mg">//           ],</span><br><span class="mg">//         ),</span><br><span class="mg">//       ),</span><br><span class="mg">//       floatingActionButton: FloatingActionButton(</span><br><span class="mg">//         onPressed: _incrementCounter,</span><br><span class="mg">//         tooltip: &#x27;Increment&#x27;,</span><br><span class="mg">//         child: const Icon(Icons.add),</span><br><span class="mg">//       ),</span><br><span class="mg">//     );</span><br><span class="mg">//   }</span><br><span class="mg">// }</span><br><span class="mg">// </span><br><span class="mg">// class MyFifthPage extends StatelessWidget {</span><br><span class="mg">//   const MyFifthPage({Key? key}) : super(key: key);</span><br><span class="mg">// </span><br><span class="mg">//   @override</span><br><span class="mg">//   Widget build(BuildContext context) {</span><br><span class="mg">//     return Scaffold(</span><br><span class="mg">//       appBar: AppBar(title: Text(&#x27;Fifth&#x27;)),</span><br><span class="mg">//       body: Text(&#x27;Fifth Page&#x27;),</span><br><span class="mg">//     );</span><br><span class="mg">//   }</span><br><span class="mg">// }</span><br><span class="mg">// </span><br><span class="mg">// class MySixthPage extends StatelessWidget {</span><br><span class="mg">//   const MySixthPage({Key? key}) : super(key: key);</span><br><span class="mg">// </span><br><span class="mg">//   @override</span><br><span class="mg">//   Widget build(BuildContext context) {</span><br><span class="mg">//     return new Scaffold(</span><br><span class="mg">//       appBar: new AppBar(</span><br><span class="mg">//         title: new Text(&#x27;Sixth Page&#x27;),</span><br><span class="mg">//       ),</span><br><span class="mg">//       body: Center(</span><br><span class="mg">//         child: OutlinedButton(</span><br><span class="mg">//           onPressed: () {</span><br><span class="mg">//             Navigator.pop(context, &#x27;result from sixth page value&#x27;);</span><br><span class="mg">//           },</span><br><span class="mg">//           child: new Text(&#x27;back&#x27;),</span><br><span class="mg">//         ),</span><br><span class="mg">//       ),</span><br><span class="mg">//     );</span><br><span class="mg">//   }</span><br><span class="mg">// }</span><br><span class="mg">// </span><br><span class="mg">// class RouteArgs {</span><br><span class="mg">//   final String title;</span><br><span class="mg">//   final String message;</span><br><span class="mg">// </span><br><span class="mg">//   RouteArgs(this.title, this.message);</span><br><span class="mg">// }</span><br><span class="mg">// </span><br><span class="mg">// class ExtractArgumentsScreen extends StatelessWidget {</span><br><span class="mg">//   const ExtractArgumentsScreen({Key? key}) : super(key: key);</span><br><span class="mg">// </span><br><span class="mg">//   static const routeName = &#x27;/extractArguments&#x27;;</span><br><span class="mg">// </span><br><span class="mg">//   @override</span><br><span class="mg">//   Widget build(BuildContext context) {</span><br><span class="mg">//     final args = ModalRoute.of(context)!.settings.arguments as RouteArgs;</span><br><span class="mg">//     return Scaffold(</span><br><span class="mg">//       appBar: AppBar(</span><br><span class="mg">//         title: Text(args.title),</span><br><span class="mg">//       ),</span><br><span class="mg">//       body: Center(</span><br><span class="mg">//         child: Text(args.message),</span><br><span class="mg">//       ),</span><br><span class="mg">//     );</span><br><span class="mg">//   }</span><br><span class="mg">// }</span><br><span class="mg">// </span><br><span class="mg">// class PassArgumentsScreen extends StatelessWidget {</span><br><span class="mg">//   static const routeName = &#x27;/passArguments&#x27;;</span><br><span class="mg">//   final String title;</span><br><span class="mg">//   final String message;</span><br><span class="mg">// </span><br><span class="mg">//   const PassArgumentsScreen({</span><br><span class="mg">//     Key? key,</span><br><span class="mg">//     required this.title,</span><br><span class="mg">//     required this.message,</span><br><span class="mg">//   }) : super(key: key);</span><br><span class="mg">// </span><br><span class="mg">//   @override</span><br><span class="mg">//   Widget build(BuildContext context) {</span><br><span class="mg">//     return Scaffold(</span><br><span class="mg">//       appBar: AppBar(</span><br><span class="mg">//         title: Text(title),</span><br><span class="mg">//       ),</span><br><span class="mg">//       body: Center(</span><br><span class="mg">//         child: Text(message),</span><br><span class="mg">//       ),</span><br><span class="mg">//     );</span><br><span class="mg">//   }</span><br><span class="mg">// }</span><br><span class="mg">// </span><br><span class="mg">// class HomeScreen extends StatelessWidget {</span><br><span class="mg">//   const HomeScreen({Key? key}) : super(key: key);</span><br><span class="mg">// </span><br><span class="mg">//   @override</span><br><span class="mg">//   Widget build(BuildContext context) {</span><br><span class="mg">//     return Scaffold(</span><br><span class="mg">//       appBar: AppBar(</span><br><span class="mg">//         title: const Text(&#x27;Home Screen&#x27;),</span><br><span class="mg">//       ),</span><br><span class="mg">//       body: Center(</span><br><span class="mg">//         child: Column(</span><br><span class="mg">//           mainAxisAlignment: MainAxisAlignment.center,</span><br><span class="mg">//           children: [</span><br><span class="mg">//             ElevatedButton(</span><br><span class="mg">//               onPressed: () {</span><br><span class="mg">//                 Navigator.pushNamed(</span><br><span class="mg">//                   context,</span><br><span class="mg">//                   ExtractArgumentsScreen.routeName,</span><br><span class="mg">//                   arguments: RouteArgs(</span><br><span class="mg">//                     &#x27;Extract Arguments Screen&#x27;,</span><br><span class="mg">//                     &#x27;This message is extracted in the build method.&#x27;,</span><br><span class="mg">//                   ),</span><br><span class="mg">//                 );</span><br><span class="mg">//               },</span><br><span class="mg">//               child: const Text(&#x27;Navigate to screen that extracts arguments&#x27;),</span><br><span class="mg">//             ),</span><br><span class="mg">//             ElevatedButton(</span><br><span class="mg">//               onPressed: () {</span><br><span class="mg">//                 Navigator.pushNamed(</span><br><span class="mg">//                   context,</span><br><span class="mg">//                   PassArgumentsScreen.routeName,</span><br><span class="mg">//                   arguments: RouteArgs(</span><br><span class="mg">//                     &#x27;Accept Arguments Screen&#x27;,</span><br><span class="mg">//                     &#x27;This message is extracted in the onGenerateRoute function.&#x27;,</span><br><span class="mg">//                   ),</span><br><span class="mg">//                 );</span><br><span class="mg">//               },</span><br><span class="mg">//               child: const Text(&#x27;Navigate to a named that accepts arguments&#x27;),</span><br><span class="mg">//             ),</span><br><span class="mg">//           ],</span><br><span class="mg">//         ),</span><br><span class="mg">//       ),</span><br><span class="mg">//     );</span><br><span class="mg">//   }</span><br><span class="mg">// }</span><br><span class="mg">// </span><br><span class="mg">// </span><br><span class="mg">// class MyFourthPage extends StatefulWidget {</span><br><span class="mg">//   const MyFourthPage({Key? key, required this.title}) : super(key: key);</span><br><span class="mg">//   final String title;</span><br><span class="mg">// </span><br><span class="mg">//   @override</span><br><span class="mg">//   State&lt;MyFourthPage&gt; createState() =&gt; _MyFourthPageState();</span><br><span class="mg">// }</span><br><span class="mg">// </span><br><span class="mg">// class _MyFourthPageState extends State&lt;MyFourthPage&gt; {</span><br><span class="mg">//   int _counter = 0;</span><br><span class="mg">// </span><br><span class="mg">//   void _incrementCounter() {</span><br><span class="mg">//     setState(() {</span><br><span class="mg">//       _counter++;</span><br><span class="mg">//     });</span><br><span class="mg">//   }</span><br><span class="mg">// </span><br><span class="mg">//   @override</span><br><span class="mg">//   Widget build(BuildContext context) {</span><br><span class="mg">//     return Scaffold(</span><br><span class="mg">//       appBar: AppBar(</span><br><span class="mg">//         title: Text(widget.title),</span><br><span class="mg">//       ),</span><br><span class="mg">//       body: Center(</span><br><span class="mg">//         child: Column(</span><br><span class="mg">//           mainAxisAlignment: MainAxisAlignment.center,</span><br><span class="mg">//           children: &lt;Widget&gt;[</span></div></div></div>
<div class="abs" style="left:827px;top:69px;width:3px;height:534px;background:linear-gradient(90deg,#00000070,#00000000)"></div>
<div class="abs" style="left:911px;top:69px;width:1px;height:534px;background:#3a3b35"></div>
<div class="abs" style="left:912px;top:113px;width:16px;height:32px;background:#5a5a5a80"></div>
<div class="abs" style="left:922px;top:69px;width:6px;height:6px;background:#4fa7ff"></div>
<div class="abs" style="left:917.5px;top:74px;width:5px;height:12px;background:#b8b8b8"></div>
<div class="abs" style="left:912px;top:83.5px;width:16px;height:2px;background:#e0e0e0"></div>
</body></html>
